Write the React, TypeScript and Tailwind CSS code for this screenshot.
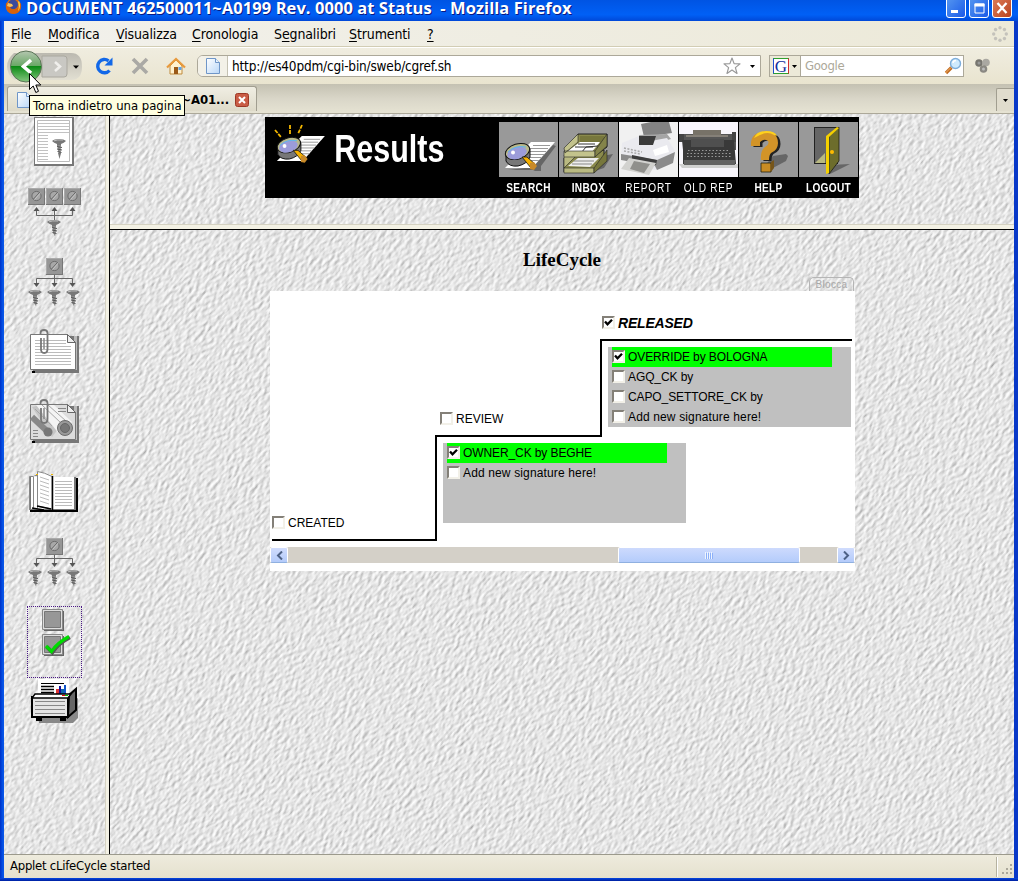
import type { ReactNode } from "react";

const ui = "font-['DejaVu_Sans_Condensed','DejaVu_Sans',sans-serif] [font-stretch:condensed]";

function Texture({ id, seed }: { id: string; seed: number }) {
  return (
    <svg className="absolute inset-0 h-full w-full" aria-hidden="true">
      <filter id={id} x="0" y="0" width="100%" height="100%" colorInterpolationFilters="sRGB">
        <feTurbulence type="fractalNoise" baseFrequency="0.17 0.32" numOctaves="2" seed={seed} />
        <feDiffuseLighting surfaceScale="0.75" diffuseConstant="1.02" lightingColor="#ffffff">
          <feDistantLight azimuth="250" elevation="62" />
        </feDiffuseLighting>
      </filter>
      <g transform="rotate(-48)">
        <rect x="-900" y="-200" width="1800" height="1700" filter={`url(#${id})`} />
      </g>
    </svg>
  );
}

function Caret() {
  return (
    <svg width="5" height="3" className="shrink-0"><path d="M0 0h5L2.5 3z" fill="#000" /></svg>
  );
}

function PageIcon() {
  return (
    <svg width="14" height="16" viewBox="0 0 14 16" className="shrink-0">
      <defs><linearGradient id="pg" x1="0" y1="0" x2="1" y2="1"><stop offset="0" stopColor="#fff" /><stop offset="1" stopColor="#b9d7f8" /></linearGradient></defs>
      <path d="M.5.5h9l4 4v11H.5z" fill="url(#pg)" stroke="#6f96c8" />
      <path d="M9.5.5v4h4" fill="#e8f2fe" stroke="#6f96c8" />
    </svg>
  );
}

function FirefoxIcon() {
  return (
    <svg width="17" height="16" viewBox="0 0 17 16" className="shrink-0">
      <circle cx="8.5" cy="6" r="7.5" fill="#e8740c" />
      <circle cx="8" cy="4.5" r="5" fill="#3b4a9c" />
      <path d="M1 3c2 0 3 1 5 1l2 2-3 1c1 3 6 3 8 0 1-2 0-5-1-7l4 4c1 5-2 10-7.500 10C3 14 0 10 1 3z" fill="#d8620a" />
      <path d="M3 3l4 1 1 2-3 1-3-1z" fill="#f8c460" />
      <path d="M14 1c2 4 1 8-1 10 1-3 1-6 0-9z" fill="#fbd34a" />
    </svg>
  );
}

function TitleBar() {
  const btn = "h-[24px] w-5 -mt-[6px] rounded-[3px] border border-white";
  return (
    <div className="flex h-[21px] shrink-0 items-start bg-linear-to-b from-[#0054e3] via-[#0060f6] via-70% to-[#0048d8] pl-[5px]">
      <FirefoxIcon />
      <div className="ml-[4px] whitespace-pre font-['Open_Sans',sans-serif] text-[16.5px] leading-[15px] font-bold tracking-[0.06px] text-white [text-shadow:1px_1px_#0a1883]">DOCUMENT 462500011~A0199 Rev. 0000 at Status  - Mozilla Firefox</div>
      <div className="ml-auto flex gap-[3px] pr-[6px]">
        <div className={`${btn} bg-linear-to-br from-[#5a9af0] to-[#1c58e8]`}><svg width="18" height="22"><path d="M4 15h7v3H4z" fill="#fff" /></svg></div>
        <div className={`${btn} bg-linear-to-br from-[#5a9af0] to-[#1c58e8]`}><svg width="18" height="22"><path d="M5 9h9v9H5z" fill="none" stroke="#fff" /><path d="M4.500 8.500h10v3h-10z" fill="#fff" /></svg></div>
        <div className={`${btn} bg-linear-to-br from-[#e0805c] to-[#b8421c]`}><svg width="18" height="22"><path d="M4.500 8l9 10m0-10l-9 10" stroke="#fff" strokeWidth="2.300" /></svg></div>
      </div>
    </div>
  );
}

const menus: [string, string, string, string][] = [
  ["", "F", "ile", "w-[37px]"],
  ["", "M", "odifica", "w-[68px]"],
  ["", "V", "isualizza", "w-[76px]"],
  ["", "C", "ronologia", "w-[82px]"],
  ["S", "e", "gnalibri", "w-[75px]"],
  ["", "S", "trumenti", "w-[78px]"],
  ["", "?", "", "w-5"],
];

function MenuBar() {
  return (
    <div className="flex h-[26px] shrink-0 items-center border-b border-[#d2cdb4] bg-linear-to-r from-[#f2f1ec] to-[#ece9d8] pt-px pl-[7px]">
      {menus.map(([a, b, c, w]) => (
        <div key={b + c} className={`${w} ${ui} whitespace-nowrap text-[14px] tracking-[-0.12px] text-black`}>
          {a}<span className="underline underline-offset-2">{b}</span>{c}
        </div>
      ))}
      <svg className="mr-[6px] ml-auto" width="16" height="16" viewBox="-8 -8 16 16">
        {[0, 45, 90, 135, 180, 225, 270, 315].map((d) => (
          <circle key={d} cx="0" cy="-6.300" r="1.700" fill="#c4c2bb" transform={`rotate(${d})`} />
        ))}
      </svg>
    </div>
  );
}

function NavButtons() {
  return (
    <svg width="78" height="36" viewBox="0 0 78 36" className="shrink-0">
      <defs>
        <linearGradient id="nb" x1="0" y1="0" x2="0" y2="1"><stop offset="0" stopColor="#bbb9b0" /><stop offset="1" stopColor="#e2dfd2" /></linearGradient>
        <linearGradient id="bk" x1="0" y1="0" x2="0" y2="1"><stop offset="0" stopColor="#b4c6b0" /><stop offset=".48" stopColor="#69a865" /><stop offset=".5" stopColor="#0c8a15" /><stop offset="1" stopColor="#86c880" /></linearGradient>
      </defs>
      <path d="M8 5h57q11 0 11 13.500T65 32H8Q1 26 1 18.500T8 5z" fill="url(#nb)" />
      <path d="M36 8h22q3 0 3 3v15q0 3-3 3H36z" fill="#c9c8c3" stroke="#aaa89f" />
      <circle cx="20" cy="18.500" r="15.500" fill="url(#bk)" stroke="#5d7559" />
      <path d="M25 12l-7.500 6.500L25 25" fill="none" stroke="#fff" strokeWidth="3.600" />
      <path d="M49 14l5 4.500-5 4.500" fill="none" stroke="#f0efec" strokeWidth="2.600" />
      <path d="M70 17.500h6l-3 3.300z" fill="#000" transform="translate(-3 0)" />
    </svg>
  );
}

function Toolbar() {
  return (
    <div className="flex h-[37px] shrink-0 items-center border-t border-white bg-linear-to-b from-[#f0ede0] to-[#e9e4cf] pl-[2px]">
      <NavButtons />
      <svg className="ml-[11px] shrink-0" width="19" height="20" viewBox="0 0 19 20">
        <path d="M14.500 14.500A6.700 6.700 0 1 1 13.500 4.800" fill="none" stroke="#1268e8" strokeWidth="3.400" /><path d="M17.500 1.500v8h-8z" fill="#1268e8" />
      </svg>
      <svg className="ml-[17px] shrink-0" width="18" height="18"><path d="M2 2l14 14M16 2L2 16" stroke="#aaa9a5" strokeWidth="3.600" /></svg>
      <svg className="ml-[17px] shrink-0" width="20" height="18" viewBox="0 0 20 18">
        <path d="M4 9v8h12V9l-6-6z" fill="#fff2cf" stroke="#bf8a3c" /><path d="M1 10.500l9-8.500 9 8.500" fill="none" stroke="#e89a3d" strokeWidth="2.200" /><path d="M8 10h4v7H8z" fill="#9b5a18" /><path d="M12.500 10h3v3h-3z" fill="#5fa3e8" />
      </svg>
      <div className="ml-[11px] flex h-[22px] w-[564px] shrink-0 items-center rounded-l-[6px] border border-[#aca899] bg-white">
        <div className="flex h-full w-[30px] items-center justify-center rounded-l-[5px] border-r border-[#c5c2b3] bg-[#f3f1e8]"><PageIcon /></div>
        <div className={`${ui} ml-[4px] whitespace-nowrap text-[13.5px] tracking-[-0.19px] text-black`}>http://es40pdm/cgi-bin/sweb/cgref.sh</div>
        <svg className="ml-auto" width="18" height="18" viewBox="0 0 18 18"><path d="M9 1l2.100 5.600 5.900.3-4.600 3.700 1.600 5.800L9 13.100l-5 3.300 1.600-5.800L1 6.900l5.900-.3z" fill="#fff" stroke="#999" strokeWidth="1.200" strokeLinejoin="round" /></svg>
        <div className="mr-[5px] ml-[9px] flex"><Caret /></div>
      </div>
      <div className="ml-2 flex h-[22px] w-[195px] shrink-0 items-center border border-[#aca899] bg-white">
        <div className="flex h-full w-[31px] items-center gap-[3px] border-r border-[#aca899] bg-[#ece9d8] pl-[3px]">
          <div className="flex h-4 w-4 shrink-0 items-center justify-center border border-t-[#2ea02e] border-r-[#d03030] border-b-[#2ea02e] border-l-[#2050d0] bg-white font-['Liberation_Serif',serif] text-[17px] leading-none text-[#14309c]">G</div>
          <Caret />
        </div>
        <div className={`${ui} ml-[4px] text-[13px] tracking-[-0.3px] text-[#aca899]`}>Google</div>
        <svg className="mr-[1px] ml-auto" width="18" height="18" viewBox="0 0 18 18"><path d="M7.500 10.500L2 16" stroke="#c06a20" strokeWidth="3.200" /><path d="M7 10.500L1.500 16" stroke="#f5b56b" /><circle cx="11.500" cy="6.500" r="5" fill="#cfeafd" stroke="#7eaedb" strokeWidth="1.400" /><path d="M9 6q0-2.500 3-2.500" stroke="#fff" strokeWidth="1.500" fill="none" /></svg>
      </div>
      <svg className="ml-[11px] shrink-0" width="16" height="16"><circle cx="4" cy="5" r="3.800" fill="#77756f" /><circle cx="11" cy="4.500" r="3.800" fill="#aaa8a2" /><circle cx="8.500" cy="11" r="3.800" fill="#8a8882" /><circle cx="8.500" cy="11" r="1.500" fill="#bbb" /><circle cx="4" cy="5" r="1.500" fill="#999" /></svg>
    </div>
  );
}

function TabStrip() {
  return (
    <div className="flex h-[30px] shrink-0 items-end border-b border-[#aca899] bg-linear-to-b from-[#c4c1b2] via-[#d9d6c8] to-[#e6e3d3] pb-[2px]">
      <div className="ml-[3px] flex h-[25px] w-[250px] items-center rounded-t-[3px] border border-b-0 border-[#a19e90] bg-linear-to-b from-[#f0eee3] to-[#dedac9] pt-[2px] pl-[9px]">
        <PageIcon />
        <div className={`${ui} ml-auto text-[13px] font-bold tracking-[-0.1px] text-black`}>~A01...</div>
        <svg className="mr-[7px] ml-[6px]" width="14" height="14"><rect x=".5" y=".5" width="13" height="13" rx="2" fill="#c95c45" stroke="#9c3826" /><path d="M4 4l6 6m0-6l-6 6" stroke="#fff" strokeWidth="2" /></svg>
      </div>
      <div className="ml-auto flex h-[23px] w-[18px] items-center justify-center rounded-tl-[2px] border-t border-l border-[#a19e90] bg-[#e0dccd]"><Caret /></div>
    </div>
  );
}

/* ---------- sidebar drawings ---------- */

function Nut({ x, y }: { x: number; y: number }) {
  return (
    <g transform={`translate(${x} ${y})`}>
      <path d="M0 0h17v17H0z" fill="#777" /><path d="M0 0h16v16H0z" fill="#aaa" /><path d="M1 1h15v15H1z" fill="#969696" />
      <circle cx="8.500" cy="8" r="4.600" fill="#a8a8a8" stroke="#6c6c6c" /><path d="M5.500 11l6-6.500" stroke="#666" /><path d="M6.500 11.700l6-7" stroke="#c4c4c4" />
    </g>
  );
}

function Screw({ x, y }: { x: number; y: number }) {
  return (
    <g transform={`translate(${x} ${y})`}>
      <path d="M-7 2q2-2 7-2t7 2q-2 2-5 3v2h-4V5q-3-1-5-3z" fill="#777" /><path d="M-5 1.800q3-1.300 9-.8" stroke="#bbb" fill="none" />
      <path d="M-1.800 6h3.600v7L1 16.500-.8 13z" fill="#8b8b8b" /><path d="M-2 7.500l5 1m-5 1.500l5 1m-4.500 1.500l4 1" stroke="#555" />
    </g>
  );
}

function TreeIcon() {
  return (
    <>
      <Nut x={19} y={1} />
      <path d="M27.500 18v9M9.500 27v-5.500h36V27" fill="none" stroke="#666" />
      <path d="M6.500 26h6l-3 4zM24.500 26h6l-3 4zM42.500 26h6l-3 4z" fill="#555" />
      <Screw x={8} y={33} /><Screw x={27} y={33} /><Screw x={46} y={33} />
    </>
  );
}

function Clip() {
  return (
    <>
      <path d="M13.500 8v-2q0-3 3.500-3t3.500 3v16q0 4-3.300 4t-3.200-4V11" fill="none" stroke="#777" strokeWidth="1.800" />
      <path d="M17 22V11" stroke="#888" strokeWidth="1.500" />
    </>
  );
}

function Sheet({ children }: { children: ReactNode }) {
  return (
    <>
      <path d="M6 9h46v37H6z" fill="#777" /><path d="M5 44h3v2H5z" fill="#000" /><path d="M47 9h3v34h-3z" fill="#bbb" />
      <path d="M3.500 7.500h37l8 8v27h-45z" fill="#fff" stroke="#777" />
      {children}
      <path d="M40.500 7.500v8h8z" fill="#eee" stroke="#666" />
      <Clip />
    </>
  );
}

function SideIcon({ children }: { children: ReactNode }) {
  return <svg width="55" height="70" viewBox="0 0 55 70" className="block shrink-0">{children}</svg>;
}

function Sidebar() {
  return (
    <div className="relative w-[101px] shrink-0 overflow-hidden bg-[#dedede]">
      <Texture id="tx-side" seed={4} />
      <div className="relative flex flex-col pt-[3px] pl-[23px]">
        <SideIcon>
          <path d="M7 0h40v49H7z" fill="#777" /><path d="M8 1h37v46H8z" fill="#fff" /><path d="M10.500 3.500h32v41h-32z" fill="none" stroke="#bbb" />
          <path d="M11 6.500h31M11 9.500h31M11 12.500h31M11 15.500h31M11 18.500h10M11 21.500h10M11 24.500h10M11 27.500h10M11 30.500h10M11 33.500h10M11 36.500h10M11 39.500h10M11 42.500h10" stroke="#c2c2c2" />
          <g transform="translate(0 21)"><Screw x={32} y={1} /><path d="M31 15h3l-1.500 6z" fill="#777" /></g>
        </SideIcon>
        <SideIcon>
          <Nut x={1} y={1} /><Nut x={19} y={1} /><Nut x={37} y={1} />
          <path d="M9.500 23v5.500h36V23M27.500 22v11" fill="none" stroke="#666" />
          <path d="M6.500 24h6l-3-4zM24.500 24h6l-3-4zM42.500 24h6l-3-4z" fill="#555" />
          <Screw x={27} y={33} />
        </SideIcon>
        <SideIcon><TreeIcon /></SideIcon>
        <SideIcon>
          <Sheet><path d="M8 13.500h31M8 16.500h31M8 19.500h36M8 22.500h36M8 25.500h36M8 28.500h36M8 31.500h36M8 34.500h36M8 37.500h36" stroke="#bbb" /></Sheet>
        </SideIcon>
        <SideIcon>
          <Sheet>
            <path d="M4 8h36l8 8v26H4z" fill="#dcdcdc" /><path d="M5 10l8-2 22 19-10 13z" fill="#c5c5c5" /><path d="M9 8h18l18 17-12 13z" fill="#f4f4f4" /><path d="M15 8l19 18M21 8l18 16M8 12l17 17" stroke="#a8a8a8" /><path d="M5 20l17 16" stroke="#888" strokeWidth="6" />
            <circle cx="21" cy="35" r="4.500" fill="#777" /><circle cx="38" cy="31" r="7.500" fill="#999" stroke="#6c6c6c" /><circle cx="38" cy="31" r="4.500" fill="#777" stroke="#666" /><path d="M31 11.500h8M31 14.500h8M6 33.500h5M6 36.500h5M6 39.500h5" stroke="#888" />
          </Sheet>
        </SideIcon>
        <SideIcon>
          <path d="M3 11h48v34H3z" fill="#000" /><path d="M3 10h46v33H3z" fill="#777" /><path d="M4 10h21v32H4zM26 10h21v32H26z" fill="#fff" />
          <path d="M28 14.500h17M28 17.500h17M28 20.500h17M28 23.500h17M28 26.500h17M28 29.500h17M28 32.500h17M28 35.500h17M28 38.500h17" stroke="#bbb" />
          <path d="M2.500 43V9.500h4v32M7.500 8.500h3v33" fill="none" stroke="#888" /><path d="M10.500 4.500q7 1 14.500 5v32.500l-14.500-3z" fill="#fff" stroke="#888" /><path d="M13 10l9 3m-9 1l9 3m-9 1l9 3m-9 1l9 3m-9 1l9 3m-9 1l9 3m-9 1l9 3" stroke="#bbb" />
          <path d="M25.500 9v34M5 41l12 2M10 39l14 3" stroke="#000" strokeWidth="1.500" /><path d="M9 7h2v1H9zM24 7h2v1h-2z" fill="#f0b800" />
        </SideIcon>
        <SideIcon><TreeIcon /></SideIcon>
        <div className="-mt-px -mb-px h-[72px] w-[55px] border border-dotted border-[#4b1a86]">
          <svg width="53" height="70" viewBox="1 0 53 70" className="block">
            {[2, 27].map((y) => (
              <g key={y} transform={`translate(15 ${y})`}><path d="M2 2h20v20H2z" fill="#666" /><path d="M.5.500h20v20H.5z" fill="#ddd" stroke="#888" /><path d="M2.500 2.500h16v16h-16z" fill="#979797" stroke="#777" /></g>
            ))}
            <path d="M19 39l5.500 5.500Q30 36 42 29.500" fill="none" stroke="#555" strokeWidth="4" transform="translate(.8 .8)" /><path d="M19 39l5.500 5.500Q30 36 42 29.500" fill="none" stroke="#00dc00" strokeWidth="3.200" />
          </svg>
        </div>
        <SideIcon>
          <path d="M11 41l40-20v20l-5 5H12z" fill="#888" /><path d="M11 2h31v16H11z" fill="#fff" />
          <path d="M14 6.500h23" stroke="#000" /><path d="M14 9.500h13M14 12.500h13M14 15.500h13" stroke="#000" strokeWidth="1.600" /><path d="M29 12h3v5h-3z" fill="#d33" /><path d="M32 9h2v8h-2z" fill="#119" /><path d="M34 12h3v5h-3z" fill="#16a" /><path d="M37 8h2v9h-2z" fill="#15c" />
          <path d="M42 18l7-6v21l-8 7z" fill="#666" stroke="#000" strokeWidth="2" /><path d="M5 20h36v20H5z" fill="#e5e5e5" stroke="#000" strokeWidth="2" /><path d="M8 17h36l-3 4H5z" fill="#fff" stroke="#000" strokeWidth="1.500" />
          <path d="M8 24.500h30M8 28.500h30M8 32.500h30M8 36.500h30" stroke="#888" /><path d="M9 41h6v3H9zM33 41h6v3h-6z" fill="#000" /><path d="M35 18h3v1h-3z" fill="#e00" /><path d="M38 18h3v1h-3z" fill="#0c0" />
        </SideIcon>
      </div>
    </div>
  );
}

/* ---------- banner ---------- */

function Magnifier() {
  return (
    <g>
      <path d="M3 27h27l23-26H29z" fill="#fff" /><path d="M31 4.500h17M29 7.500h17M27 10.500h17M25 13.500h17M24 16.500h15M22 19.500h15" stroke="#999" />
      <path d="M4 10v10q3 6 12 5 9-2 12-9V7z" fill="#777" stroke="#111" />
      <ellipse cx="15.500" cy="10.500" rx="12.500" ry="7.500" transform="rotate(-17 15.500 10.500)" fill="#b9b98c" stroke="#111" />
      <ellipse cx="15" cy="12" rx="10" ry="6" transform="rotate(-17 15 12)" fill="#9c9cda" /><path d="M6 11q7-7 18-5" stroke="#5ab8f0" fill="none" /><circle cx="11" cy="11.500" r="2" fill="#fff" />
      <path d="M20 16l5 0 8 7-4 4z" fill="#f5b000" stroke="#111" strokeWidth=".8" /><path d="M28 22l4-1 3 4-3 4-4-1z" fill="#c98a28" />
    </g>
  );
}

function TileArt({ kind }: { kind: string }) {
  if (kind === "SEARCH") return <g transform="translate(3 19)"><path d="M6 29h25l2 1h6v-5l15-20-3-1-20 22z" fill="#666" /><Magnifier /></g>;
  if (kind === "INBOX")
    return (
      <g>
        <path d="M43 34l11-2-9 14-12 4z" fill="#666" />
        <path d="M5 36l14-6 26-2v11L35 50H5z" fill="#8a8a4c" stroke="#222" /><path d="M9 44l10-8h21l-9 9z" fill="#eee" /><path d="M15 39h20M13 42h20" stroke="#888" /><path d="M5 35l12-9v8L5 46zM5 46h30v5H5z" fill="#b9b981" stroke="#222" strokeWidth=".6" /><path d="M35 46l13-18v11L35 51z" fill="#77773c" stroke="#222" strokeWidth=".6" />
        <path d="M19 12h29v13L36 34H5z" fill="#8a8a4c" stroke="#222" /><path d="M21 14h24v10H21z" fill="#77773c" /><path d="M9 29l12-9h20l-9 11z" fill="#fff" /><path d="M19 22h17M16 25h18M22 31l5-6 12-1" stroke="#333" fill="none" /><path d="M5 26l14-14v8L6 31zM5 29h31v6H5z" fill="#c3c38c" stroke="#222" strokeWidth=".6" /><path d="M36 29l12-17v12L36 35z" fill="#84844a" stroke="#222" strokeWidth=".6" />
      </g>
    );
  if (kind === "REPORT")
    return (
      <g>
        <path d="M0 0h59v55H0z" fill="#f1f1f1" /><path d="M22 2l10-2h18l3 11-28 4z" fill="#828282" /><path d="M20 13l28-1 4 5-28 8z" fill="#a5a5a5" />
        <path d="M3 21l17-7 6 6 22-4 8 13-3 12-17 7L2 34z" fill="#eaeaef" /><path d="M20 14h17l-3 9H20z" fill="#3b3b3b" />
        <path d="M2 32l36 6 18-8-2 11-16 7-2-4L2 38z" fill="#8b8b8b" /><path d="M13 33l25 5-1 5-24-4z" fill="#3d3d3d" /><path d="M10 36l27 5-7 12-28-6z" fill="#d2d2cf" /><path d="M15 39l16 3-6 9-14-4z" fill="#90908c" />
        <path d="M5 26l18 4M5 29l16 3" stroke="#aaa" strokeWidth="1.500" strokeDasharray="2 1.500" /><path d="M34 28l14-5 2 7-14 4z" fill="#fff" />
      </g>
    );
  if (kind === "OLD REP")
    return (
      <g>
        <path d="M0 0h59v55H0z" fill="#f8f6fc" /><path d="M0 42h59v4H3z" fill="#d0d0d0" /><path d="M5 12h48l4 6v10H4z" fill="#555" /><path d="M14 8h28v7H14z" fill="#777268" /><path d="M0 12h5v8H0zM53 10h4v10h-4z" fill="#444" /><path d="M3 18h52l2 24H4V28z" fill="#393939" /><path d="M12 17h33v8H12z" fill="#4f4f4f" /><path d="M7 14h42" stroke="#858078" strokeWidth="2" />
        <path d="M9 28.500h42M8 31.500h44M8 34.500h44" stroke="#999" strokeWidth="1.200" strokeDasharray="1.500 2" /><path d="M5 38h51v5H5z" fill="#626262" />
      </g>
    );
  if (kind === "HELP")
    return (
      <g>
        <path d="M34 34l13-2 2 2-2 5-15 8-8-1z" fill="#666" />
        <path d="M13 24q-1-14 14-14 13 0 13 11 0 7-7 10-2 2-2 7h-8q-1-9 4-13 5-3 3-6-4-3-8 1v4z" fill="#222" transform="translate(1.500 1)" />
        <path d="M12 24q-1-14 14-14 13 0 13 11 0 7-7 10-2 2-2 7h-8q-1-9 4-13 5-3 3-6-4-3-8 1v4z" fill="#d39428" /><path d="M15 16q3-7 12-7 9 0 11 5l-3-1q-6-4-14 0z" fill="#ffd11c" /><path d="M22 41h10v9H22z" fill="#c98c24" stroke="#221" strokeWidth=".8" /><path d="M32 40l3-2v8l-3 4z" fill="#76551a" />
      </g>
    );
  return (
    <g>
      <path d="M31 43l20-1-20 10z" fill="#666" /><path d="M15 5h24v37H15z" fill="#222" /><path d="M16 6h22v35H16z" fill="#666" /><path d="M16 41l10-10v10z" fill="#b9b981" />
      <path d="M30 14l10-9v34l-10 13z" fill="#6d6d2c" stroke="#111" strokeWidth=".7" /><path d="M27 14L38 5l2 1-10 9v36l-3 1z" fill="#f5d000" /><circle cx="33" cy="30" r="2" fill="#fb0" />
    </g>
  );
}

const tiles = [
  { label: "SEARCH", bold: true }, { label: "INBOX", bold: true }, { label: "REPORT", bold: false },
  { label: "OLD REP", bold: false }, { label: "HELP", bold: true }, { label: "LOGOUT", bold: true },
];

function Banner() {
  return (
    <div className="ml-[155px] flex h-[81px] w-[594px] items-start bg-black pt-[5px]">
      <svg width="61" height="50" viewBox="0 0 61 50" className="ml-[9px] shrink-0">
        <g transform="translate(0 13) scale(.96)"><Magnifier /></g>
        <path d="M1 8l6 7M16 3v10M28 3l-4 9" stroke="#f5b800" strokeWidth="1.800" strokeDasharray="4 1" />
      </svg>
      <div className="w-[164px] origin-left scale-x-[0.803] pt-[4px] font-['Liberation_Sans',sans-serif] text-[38px] leading-[46px] font-bold text-white"><span className="-ml-px">Results</span></div>
      {tiles.map((t) => (
        <div key={t.label} className="flex w-[60px] shrink-0 flex-col">
          <svg width="59" height="55" viewBox="0 0 59 55" className="block bg-[#999]"><TileArt kind={t.label} /></svg>
          <div className={`mt-[3px] flex w-[59px] justify-center whitespace-nowrap leading-[16px] text-white ${t.bold ? "font-['Liberation_Sans',sans-serif] scale-x-[0.84] text-[12px] font-bold tracking-[0.4px]" : "font-['Liberation_Sans',sans-serif] scale-x-[0.84] text-[12px] font-normal tracking-[0.9px]"}`}>{t.label}</div>
        </div>
      ))}
    </div>
  );
}

/* ---------- life cycle applet ---------- */

function Check({ on = false }: { on?: boolean }) {
  return (
    <div className="mb-px h-[13px] w-[13px] shrink-0 border-2 border-t-[#848078] border-r-[#f2f0e8] border-b-[#f2f0e8] border-l-[#848078] bg-white">
      {on && <svg width="9" height="9" className="block"><path d="M1 3.500l2.500 2.800L8 1.700" fill="none" stroke="#000" strokeWidth="2.300" /></svg>}
    </div>
  );
}

const arial = "font-['Liberation_Sans',Arial,sans-serif] text-black whitespace-nowrap";

function Signatures({ rows }: { rows: { text: string; on?: boolean }[] }) {
  return (
    <div className="h-20 w-[243px] bg-[#c0c0c0] pl-1">
      {rows.map((r) => (
        <div key={r.text} className={`flex h-5 w-[220px] items-center gap-[3px] ${r.on ? "bg-[#00ff00]" : ""}`}>
          <Check on={r.on} />
          <span className={`${arial} text-[12px] ${r.text.startsWith("Add") ? "tracking-[0.14px]" : "tracking-[-0.1px]"}`}>{r.text}</span>
        </div>
      ))}
    </div>
  );
}

function Stage({ name, on }: { name: string; on?: boolean }) {
  return (
    <div className="flex h-5 items-center gap-[3px] pl-[2px]">
      <Check on={on} />
      <span className={`${arial} ${on ? "text-[14px] font-bold italic tracking-[-0.2px]" : "text-[12px]"}`}>{name}</span>
    </div>
  );
}

function ScrollBar() {
  const btn = "flex h-4 w-[18px] items-center justify-center rounded-[2px] border border-white border-b-[#8fb0e0] bg-linear-to-b from-[#d0dcfd] to-[#b4cbfa]";
  return (
    <div className="flex h-4 w-full bg-[#d4d0c8]">
      <div className={btn}><svg width="7" height="9"><path d="M6 .5L2 4.500l4 4" fill="none" stroke="#4d6185" strokeWidth="2" /></svg></div>
      <div className="ml-[330px] flex h-4 w-[182px] items-center justify-center rounded-[2px] border border-white border-b-[#8fb0e0] bg-linear-to-b from-[#cddafd] to-[#b4ccfb]">
        <svg width="8" height="7"><path d="M.5 0v7M2.500 0v7M4.500 0v7M6.500 0v7" stroke="#eef4fe" /><path d="M1.500 1v6M3.500 1v6M5.500 1v6M7.500 1v6" stroke="#8cb0f8" /></svg>
      </div>
      <div className={`${btn} ml-auto`}><svg width="7" height="9"><path d="M1 .5l4 4-4 4" fill="none" stroke="#4d6185" strokeWidth="2" /></svg></div>
    </div>
  );
}

function LifeCycle() {
  return (
    <div className="relative flex flex-col pt-[19px]">
      <h1 className="w-[904px] text-center font-['Liberation_Serif',serif] text-[19px] leading-[22px] font-bold text-black">LifeCycle</h1>
      <div className="mt-[6px] ml-[699px] flex h-[14px] w-[45px] items-center justify-center rounded-t-[5px] border border-b-0 border-[#b5b5b5] font-['Liberation_Sans',sans-serif] text-[10px] tracking-[0.3px] text-[#a8a8a8]">Blocca</div>
      <div className="ml-[160px] flex h-[280px] w-[585px] flex-col bg-white">
        <div className="flex h-[256px] shrink-0 pl-[2px]">
          <div className="flex h-[250px] w-[163px] flex-col justify-end">
            <div className="-ml-[2px] pb-[6px]"><Stage name="CREATED" /></div>
            <div className="h-[2px] bg-black" />
          </div>
          <div className="flex h-[250px] w-[165px] flex-col">
            <div className="pt-[118px] pl-[3px]"><Stage name="REVIEW" /></div>
            <div className="mt-[6px] h-[106px] w-[167px] border-t-2 border-l-2 border-black pt-[6px] pl-[6px]">
              <Signatures rows={[{ text: "OWNER_CK by BEGHE", on: true }, { text: "Add new signature here!" }]} />
            </div>
          </div>
          <div className="flex w-[252px] flex-col">
            <div className="pt-[22px]"><Stage name="RELEASED" on /></div>
            <div className="mt-[6px] h-[98px] border-t-2 border-l-2 border-black pt-[6px] pl-[6px]">
              <Signatures rows={[{ text: "OVERRIDE by BOLOGNA", on: true }, { text: "AGQ_CK by" }, { text: "CAPO_SETTORE_CK by" }, { text: "Add new signature here!" }]} />
            </div>
          </div>
        </div>
        <ScrollBar />
      </div>
    </div>
  );
}

function StatusBar() {
  return (
    <div className="flex h-6 shrink-0 items-center border-t border-[#9c9a8c] bg-linear-to-b from-[#eeebdd] to-[#e5e1ce] pl-[6px]">
      <div className={`${ui} -mt-[2px] text-[13px] tracking-[-0.26px] text-black`}>Applet cLifeCycle started</div>
      <div className="ml-auto h-5 w-[2px] border-l border-[#b5b2a0] bg-white" />
      <svg width="16" height="22"><path d="M12 8h2v2h-2zM8 12h2v2H8zM12 12h2v2h-2zM4 16h2v2H4zM8 16h2v2H8zM12 16h2v2h-2z" fill="#aaa79a" /></svg>
    </div>
  );
}

export default function App() {
  return (
    <div className="relative flex h-[881px] w-[1018px] flex-col overflow-hidden bg-linear-to-r from-[#0030c8] via-[#0855e8] via-[3px] to-[#0838c8]">
      <TitleBar />
      <div className="mx-1 flex min-h-0 flex-1 flex-col">
        <MenuBar />
        <Toolbar />
        <TabStrip />
        <div className="flex min-h-0 flex-1">
          <Sidebar />
          <div className="w-[5px] shrink-0 border-r border-l border-r-black border-l-[#d5d2c2] bg-[#f3f1e4]" />
          <div className="flex min-w-0 flex-1 flex-col">
            <div className="relative h-[110px] shrink-0 overflow-hidden bg-[#dedede]">
              <Texture id="tx-top" seed={7} />
              <div className="relative pt-[3px]"><Banner /></div>
            </div>
            <div className="h-[6px] shrink-0 border-t border-b border-t-[#d5d2c2] border-b-black bg-[#f3f1e4]" />
            <div className="relative min-h-0 flex-1 overflow-hidden bg-[#dedede]">
              <Texture id="tx-main" seed={12} />
              <LifeCycle />
            </div>
          </div>
        </div>
        <StatusBar />
      </div>
      <div className="h-[3px] shrink-0 bg-linear-to-b from-[#0848e0] to-[#001ea0]" />
      <div className={`absolute top-[95px] left-[29px] flex h-[21px] w-[156px] items-center border border-black bg-[#ffffe1] pl-[3px] whitespace-nowrap text-[13px] tracking-[-0.02px] text-black ${ui}`}>Torna indietro una pagina</div>
      <svg className="absolute top-[73px] left-[29px]" width="13" height="21" viewBox="0 0 13 21"><path d="M.5.500v16l3.700-3.500 2.600 6.500 2.700-1.200-2.700-6.300h5z" fill="#fff" stroke="#000" /></svg>
    </div>
  );
}
